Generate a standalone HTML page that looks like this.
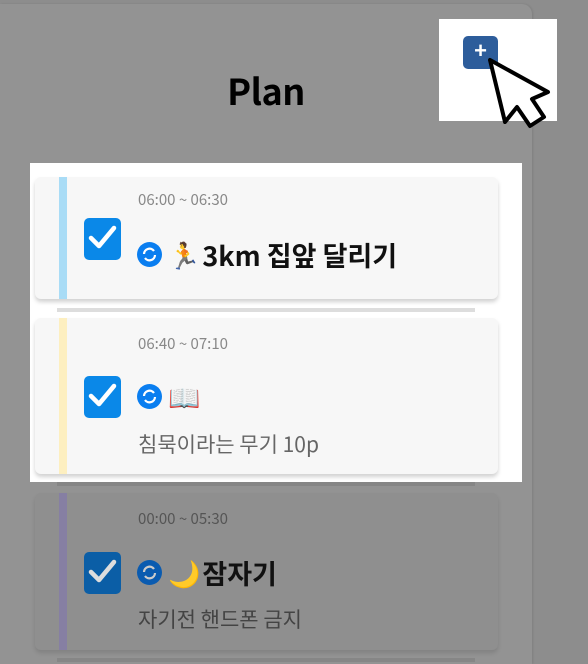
<!DOCTYPE html>
<html><head><meta charset="utf-8"><style>
*{margin:0;padding:0;box-sizing:border-box}
html,body{width:588px;height:664px;overflow:hidden}
body{background:#8d8d8d;position:relative;font-family:"Liberation Sans","Noto Sans CJK KR",sans-serif}
.panel{position:absolute;left:0;top:4px;width:532px;height:660px;background:#939393;border-radius:0 10px 0 0;box-shadow:1px 0 2px rgba(0,0,0,.1)}
.title{position:absolute;left:-28px;width:588px;top:68px;text-align:center;font-size:36px;font-weight:bold;color:#000;font-family:"Noto Sans CJK KR",sans-serif;line-height:44px;letter-spacing:-0.5px}
.hl{position:absolute;left:30px;top:163px;width:492px;height:319px;background:#fff}
.card{position:absolute;left:35px;width:463px;border-radius:6px;background:#f7f7f7;box-shadow:0 3px 4px rgba(0,0,0,.18)}
.bar{position:absolute;left:24px;top:0;bottom:0;width:8px}
.cb{position:absolute;left:49px;width:37px;height:42px;border-radius:5px;background:#0a88e8}
.cb svg{position:absolute;left:3px;top:5px}
.time{position:absolute;left:103px;font-size:15px;color:#888;font-family:"Noto Sans CJK KR",sans-serif}
.row{position:absolute;left:102px;display:flex;align-items:center;font-size:27px;font-weight:bold;font-family:"Noto Sans CJK KR",sans-serif;color:#111}
.ref{flex:0 0 25px;width:25px;height:25px;border-radius:50%;background:#0a7ef0;margin-right:6px;overflow:hidden}
.ref svg{display:block}
.emo{font-size:26px;margin-right:2px}
.sub{position:absolute;left:103px;font-size:21px;color:#666;font-family:"Noto Sans CJK KR",sans-serif}
.sep{position:absolute;left:57px;width:418px;height:4px;background:#ddd}
</style></head><body>
<div class="panel"></div>
<div class="title">Plan</div>
<div class="hl"></div>
<div class="card" style="top:177px;height:122px">
 <div class="bar" style="background:#a9dcf6"></div>
 <div class="cb" style="top:41px"><svg width="31" height="30" viewBox="0 0 31 30"><path d="M4 15 L12 23 L27 5" stroke="#fff" stroke-width="4.5" fill="none" stroke-linecap="round" stroke-linejoin="round"/></svg></div>
 <div class="time" style="top:12px">06:00 ~ 06:30</div>
 <div class="row" style="top:58px"><div class="ref"><svg width="25" height="25" viewBox="0 0 25 25"><path d="M7 12a5.5 5.5 0 0 1 10-3M18 13a5.5 5.5 0 0 1-10 3" stroke="#fff" stroke-width="2.2" fill="none"/></svg></div><span class="emo">🏃</span>3km 집앞 달리기</div>
</div>
<div class="sep" style="top:308px"></div>
<div class="card" style="top:318px;height:156px">
 <div class="bar" style="background:#fdefc0"></div>
 <div class="cb" style="top:58px"><svg width="31" height="30" viewBox="0 0 31 30"><path d="M4 15 L12 23 L27 5" stroke="#fff" stroke-width="4.5" fill="none" stroke-linecap="round" stroke-linejoin="round"/></svg></div>
 <div class="time" style="top:15px">06:40 ~ 07:10</div>
 <div class="row" style="top:60px"><div class="ref"><svg width="25" height="25" viewBox="0 0 25 25"><path d="M7 12a5.5 5.5 0 0 1 10-3M18 13a5.5 5.5 0 0 1-10 3" stroke="#fff" stroke-width="2.2" fill="none"/></svg></div><span class="emo">📖</span></div>
 <div class="sub" style="top:111px">침묵이라는 무기 10p</div>
</div>
<div class="sep" style="top:482px;background:#868686"></div>
<div class="card" style="top:493px;height:157px;background:#8f8f8f;box-shadow:0 3px 4px rgba(0,0,0,.12)">
 <div class="bar" style="background:#867fa3"></div>
 <div class="cb" style="top:59px;background:#0b5ea6"><svg width="31" height="30" viewBox="0 0 31 30"><path d="M4 15 L12 23 L27 5" stroke="#ddd" stroke-width="4.5" fill="none" stroke-linecap="round" stroke-linejoin="round"/></svg></div>
 <div class="time" style="top:15px;color:#555">00:00 ~ 05:30</div>
 <div class="row" style="top:60px"><div class="ref" style="background:#0a5bb0"><svg width="25" height="25" viewBox="0 0 25 25"><path d="M7 12a5.5 5.5 0 0 1 10-3M18 13a5.5 5.5 0 0 1-10 3" stroke="#ccc" stroke-width="2.2" fill="none"/></svg></div><span class="emo">🌙</span>잠자기</div>
 <div class="sub" style="top:111px;color:#444">자기전 핸드폰 금지</div>
</div>
<div class="sep" style="top:658px;background:#868686"></div>
<div style="position:absolute;left:439px;top:19px;width:118px;height:102px;background:#fff"></div>
<div style="position:absolute;left:463px;top:36px;width:35px;height:33px;border-radius:5px;background:#2d5d9b;color:#fff;font-size:22px;font-weight:bold;text-align:center;line-height:30px">+</div>
<svg style="position:absolute;left:0;top:0" width="588" height="664"><path d="M490 60 L505 122 L517 107 L530 126 L544 117 L532 99 L548 92 Z" fill="#fff" stroke="#000" stroke-width="4" stroke-linejoin="round"/></svg>
</body></html>
